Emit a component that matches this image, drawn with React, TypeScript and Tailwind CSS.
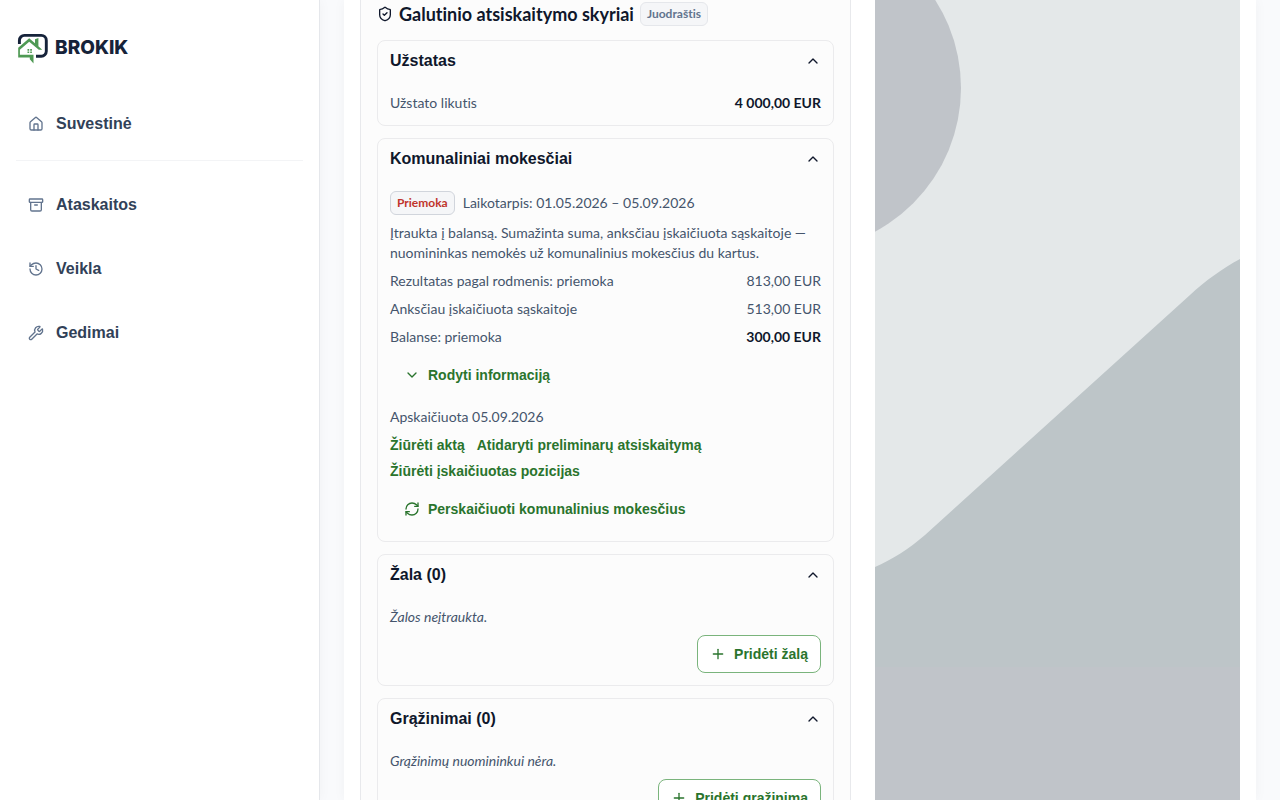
import { clsx } from 'clsx';
import {
  Archive,
  ChevronDown,
  ChevronUp,
  History,
  House,
  Plus,
  RefreshCw,
  ShieldCheck,
  Wrench,
} from 'lucide-react';
import type { LucideIcon } from 'lucide-react';
import { useState } from 'react';
import type { ReactNode } from 'react';

type NavItem = { label: string; href: string; icon: LucideIcon };

const primaryNav: NavItem[] = [{ label: 'Suvestinė', href: '#suvestine', icon: House }];

const secondaryNav: NavItem[] = [
  { label: 'Ataskaitos', href: '#ataskaitos', icon: Archive },
  { label: 'Veikla', href: '#veikla', icon: History },
  { label: 'Gedimai', href: '#gedimai', icon: Wrench },
];

const Logo = () => (
  <a href="#pradzia" className="flex items-center gap-[7px]" aria-label="Brokik">
    <svg viewBox="0 0 32 32" className="size-8" fill="none">
      <path
        d="M3.400 12V8.400a5 5 0 0 1 5-5h16.900a5 5 0 0 1 5 5v10.900a5 5 0 0 1-5 5H20"
        stroke="#16233a"
        strokeWidth="2.900"
      />
      <path
        d="M2.200 15.800 13.200 6.200 19 11.300V7.200L22.400 6v8.200L26.200 17.800H22.800L13.200 9.700 3.900 17.800V22.800H17.500V31.600L13.800 27.300V25.500H2.200Z"
        fill="#4f9a54"
      />
      <path
        d="M11.500 17h1.700v1.700h-1.700zM14.200 17h1.700v1.700h-1.700zM11.500 19.600h1.700v1.500h-1.700zM14.200 19.600h1.700v1.500h-1.700z"
        fill="#4f9a54"
      />
    </svg>
    <span className="font-['Inter',sans-serif] text-[19px] leading-7 font-extrabold text-[#16233a]">
      BROKIK
    </span>
  </a>
);

const NavList = ({ items }: { items: NavItem[] }) => (
  <ul className="flex flex-col gap-4">
    {items.map(({ label, href, icon: Icon }) => (
      <li key={label}>
        <a
          href={href}
          className="flex h-12 items-center gap-3 rounded-lg px-3 text-base font-bold text-slate-700 hover:bg-slate-50"
        >
          <Icon className="size-4 text-slate-500" />
          {label}
        </a>
      </li>
    ))}
  </ul>
);

const Sidebar = () => (
  <aside className="flex w-80 shrink-0 flex-col border-r border-gray-200 bg-white px-4 pt-8 shadow-[0_0_12px_rgba(15,23,42,0.04)]">
    <Logo />
    <nav className="mt-9">
      <NavList items={primaryNav} />
      <hr className="mt-3 mb-5 border-gray-100" />
      <NavList items={secondaryNav} />
    </nav>
  </aside>
);

const Tag = ({ children, danger }: { children: ReactNode; danger?: boolean }) => (
  <span
    className={clsx(
      'flex h-6 items-center rounded-md border bg-[#f5f6f8] px-1.5 text-xs leading-4 font-bold',
      danger ? 'border-gray-300 text-[#c0342b]' : 'border-gray-200 text-slate-500'
    )}
  >
    {children}
  </span>
);

const Section = ({ title, children }: { title: string; children: ReactNode }) => {
  const [open, setOpen] = useState(true);
  return (
    <section className="rounded-lg border border-[#ebebed]">
      <h3>
        <button
          type="button"
          aria-expanded={open}
          onClick={() => setOpen(!open)}
          className="flex h-10 w-full items-center justify-between px-3 font-['Liberation_Sans',sans-serif] text-base font-bold text-slate-900"
        >
          {title}
          <ChevronUp className={clsx('size-4', !open && 'rotate-180')} />
        </button>
      </h3>
      {open && <div className="flex flex-col gap-2 p-3">{children}</div>}
    </section>
  );
};

const Row = ({ label, value, strong }: { label: string; value: string; strong?: boolean }) => (
  <div className="flex justify-between">
    <span>{label}</span>
    <span className={clsx(strong && 'font-bold text-slate-900')}>{value}</span>
  </div>
);

const TextButton = ({ icon: Icon, children }: { icon: LucideIcon; children: ReactNode }) => (
  <button
    type="button"
    className="flex h-10 items-center gap-2 self-start rounded-lg px-3.5 font-['Liberation_Sans',sans-serif] font-bold text-[#2a742d]"
  >
    <Icon className="size-4" />
    {children}
  </button>
);

const AddButton = ({ children }: { children: ReactNode }) => (
  <button
    type="button"
    className="flex h-[38px] items-center gap-2 self-end rounded-lg border border-[#7ab47c] bg-white px-3 font-['Liberation_Sans',sans-serif] font-bold text-[#2a742d]"
  >
    <Plus className="size-4" />
    {children}
  </button>
);

const Backdrop = () => (
  <div className="min-w-0 flex-1 overflow-hidden bg-[#e4e8e9]">
    <svg viewBox="0 0 365 800" preserveAspectRatio="xMinYMin slice" className="h-full w-full">
      <circle cx="-77" cy="88" r="163" fill="#c0c4c9" />
      <path
        d="M0 567C16 560 34 549 50 535L315 295C330 281 348 268 365 259V800H0Z"
        fill="#bdc5c8"
      />
      <path d="M0 667H365V800H0Z" fill="#c0c4c9" />
    </svg>
  </div>
);

const Settlement = () => (
  <div className="w-[491px] shrink-0 border-x border-[#e8e9ec] bg-[#fcfcfc] px-4 pt-0.5 font-['Lato',sans-serif] text-sm text-slate-600 [font-variant-ligatures:none]">
    <div className="flex items-center gap-1.5">
      <ShieldCheck className="size-4 text-slate-900" />
      <h2 className="text-lg leading-6 font-bold text-slate-900">Galutinio atsiskaitymo skyriai</h2>
      <Tag>Juodraštis</Tag>
    </div>
    <div className="mt-3.5 flex flex-col gap-3">
      <Section title="Užstatas">
        <Row label="Užstato likutis" value="4 000,00 EUR" strong />
      </Section>
      <Section title="Komunaliniai mokesčiai">
        <div className="flex items-center gap-2">
          <Tag danger>Priemoka</Tag>
          <span>Laikotarpis: 01.05.2026 – 05.09.2026</span>
        </div>
        <p>
          Įtraukta į balansą. Sumažinta suma, anksčiau įskaičiuota sąskaitoje —<br />
          nuomininkas nemokės už komunalinius mokesčius du kartus.
        </p>
        <Row label="Rezultatas pagal rodmenis: priemoka" value="813,00 EUR" />
        <Row label="Anksčiau įskaičiuota sąskaitoje" value="513,00 EUR" />
        <Row label="Balanse: priemoka" value="300,00 EUR" strong />
        <TextButton icon={ChevronDown}>Rodyti informaciją</TextButton>
        <p className="pt-1">Apskaičiuota 05.09.2026</p>
        <div className="flex flex-wrap gap-x-3 gap-y-1.5 font-['Liberation_Sans',sans-serif] font-bold text-[#2a742d]">
          <a href="#aktas">Žiūrėti aktą</a>
          <a href="#preliminarus">Atidaryti preliminarų atsiskaitymą</a>
          <a href="#pozicijos">Žiūrėti įskaičiuotas pozicijas</a>
        </div>
        <TextButton icon={RefreshCw}>Perskaičiuoti komunalinius mokesčius</TextButton>
      </Section>
      <Section title="Žala (0)">
        <p className="italic">Žalos neįtraukta.</p>
        <AddButton>Pridėti žalą</AddButton>
      </Section>
      <Section title="Grąžinimai (0)">
        <p className="italic">Grąžinimų nuomininkui nėra.</p>
        <AddButton>Pridėti grąžinimą</AddButton>
      </Section>
    </div>
  </div>
);

export default function App() {
  return (
    <div className="flex h-screen overflow-hidden bg-[#f9fafc] font-['Liberation_Sans',sans-serif]">
      <Sidebar />
      <main className="flex min-w-0 flex-1 px-6">
        <div className="flex min-w-0 flex-1 gap-6 bg-white px-4 shadow-[0_0_12px_rgba(15,23,42,0.04)]">
          <Settlement />
          <Backdrop />
        </div>
      </main>
    </div>
  );
}
